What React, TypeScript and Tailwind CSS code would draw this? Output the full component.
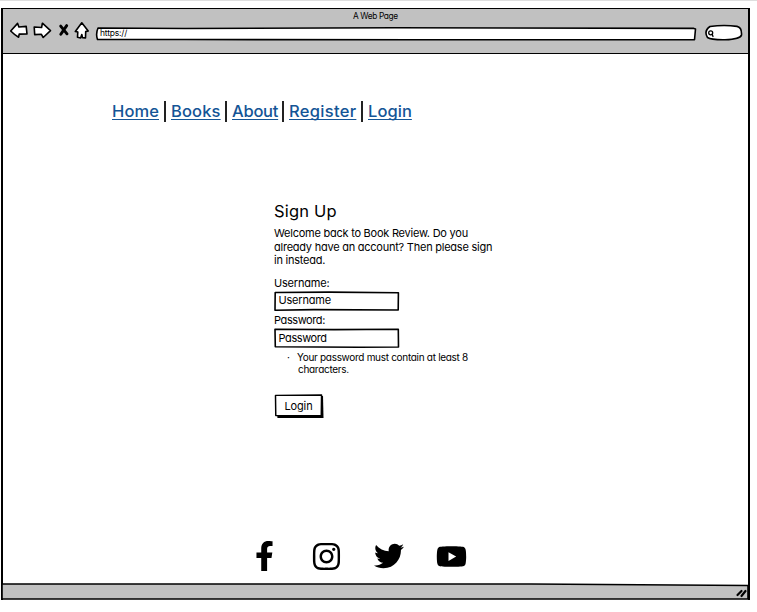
import React from "react";
import { FaFacebookF, FaInstagram, FaTwitter, FaYoutube } from "react-icons/fa";

const links = [
  { label: "Home", box: "w-[47px]", text: "tracking-[0.1px]" },
  { label: "Books", box: "w-[49px]", text: "tracking-[0.15px]" },
  { label: "About", box: "w-[45px]", text: "tracking-[-0.25px]" },
  { label: "Register", box: "w-[67px]", text: "tracking-[0.3px]" },
  { label: "Login", box: "w-[44px]", text: "tracking-[0.05px]" },
];

function NavIcons() {
  return (
    <svg className="ml-[7px] mt-[11px] h-[22px] w-[82px] shrink-0" viewBox="10 20 82 22" fill="white" stroke="black" strokeWidth="1.6" strokeLinejoin="round" strokeLinecap="round">
      <path d="M10.7 31 L17.6 23.4 L18.9 27 L26.2 26.4 L27 34 L19.2 34.1 L18.6 37.2 Q14.5 34.8 10.7 31Z" />
      <path d="M34.2 27 L41.6 27.5 L42.4 23.2 L50.5 30.6 L43.2 37.5 L41.4 34.3 L34.7 34.6Z" />
      <path d="M60.7 26.1 L67 33.8 M66.7 25.6 L60.8 34.3" strokeWidth="2.9" />
      <path d="M81.8 22.8 L88.2 31 L85.7 31.6 L85.5 38 L82.5 37.6 L81.8 34.5 L80.6 38 L77.5 37.3 L77.8 32 L75.3 31.4Z" />
    </svg>
  );
}

function Field({ label, alt }: { label: string; alt?: boolean }) {
  const spacing = alt ? "tracking-[-0.4px]" : "tracking-[-0.2px]";
  return (
    <div className="flex h-[37.5px] flex-col">
      <span className={`h-[15px] text-[11px] leading-[15px] ${spacing}`}>{label}:</span>
      <div className="relative h-[20px] w-[126px]">
        <svg className="absolute inset-0 h-full w-full" viewBox="0 0 126 20" fill="white" stroke="black" strokeWidth="1.6" strokeLinejoin="round">
          <path d={alt ? "M1 1.3 L60 1.6 L124.3 1.2 L124.5 19 L85 19.2 L1.3 18.8Z" : "M1.2 1.5 L55 1.1 L124.4 1.7 L124.2 19 L40 18.6 L1 19.2Z"} />
        </svg>
        <span className={`relative block pl-[4.5px] text-[11px] ${alt ? "leading-[20px]" : "leading-[19px]"} ${spacing}`}>{label}</span>
      </div>
    </div>
  );
}

export default function App() {
  return (
    <div className="flex h-[612px] w-[757px] flex-col overflow-hidden bg-white font-['Inter',sans-serif] text-black [font-feature-settings:'cv11']">
      <div className="h-px w-full shrink-0 bg-[#dedede]" />
      <div className="ml-[1px] mt-[7px] flex h-[592px] w-[749px] shrink-0 flex-col border-x-2 border-t-[1.5px] border-black">
        <header className="flex h-[44.5px] shrink-0 border-b-[1.5px] border-black bg-[#c1c1c1]">
          <NavIcons />
          <div className="relative ml-[3px] w-[602px]">
            <p className="ml-[258px] mt-[1px] w-[60px] whitespace-nowrap text-[8.3px] leading-[12px] tracking-[-0.35px]">A Web Page</p>
            <svg className="absolute left-0 top-[16.5px] h-[15px] w-[602px]" viewBox="0 0 602 15" fill="white" stroke="black" strokeWidth="1.6" strokeLinejoin="round">
              <path d="M3 2 L90 2.5 L300 1.8 L598.8 2.4 L600.5 3 L599.5 13.7 L320 13.8 L90 13.5 L2.5 13.4 Q0.5 8 3 2Z" />
            </svg>
            <p className="relative ml-[5px] mt-[5px] text-[8.5px] leading-[12px] tracking-[-0.2px]">https://</p>
          </div>
          <svg className="ml-[6px] mt-[14px] h-[19px] w-[40px] shrink-0" viewBox="703 23 40 19" fill="white" stroke="black" strokeWidth="1.6" strokeLinecap="round">
            <path d="M710 26.5 Q724 24.5 737 26.4 Q742 27.4 741.5 35 Q740.5 39.2 725 39.8 Q711 40 707.5 37.5 Q703.5 31 710 26.5Z" />
            <circle cx="710.7" cy="32.8" r="2" strokeWidth="1.3" />
            <path d="M712.2 34.3 L713 36.5" strokeWidth="1.3" />
          </svg>
        </header>
        <main className="flex h-[529.5px] shrink-0 flex-col">
          <nav className="ml-[109px] mt-[46.5px] flex h-[22px] items-center text-[16.5px] font-[450] leading-[22px] text-[#145596]">
            {links.map((link, i) => (
              <React.Fragment key={link.label}>
                {i > 0 && <span className="mx-[5.25px] h-[21px] w-[1.5px] shrink-0 bg-[#222]" />}
                <a className={`${link.box} ${link.text} shrink-0 whitespace-nowrap underline decoration-[1px] underline-offset-2 [text-decoration-skip-ink:none]`}>{link.label}</a>
              </React.Fragment>
            ))}
          </nav>
          <section className="ml-[271px] mt-[78px] flex h-[218px] flex-col items-start">
            <h1 className="text-[16.5px] leading-[22px] tracking-[0.2px]">Sign Up</h1>
            <p className="mt-[5px] whitespace-nowrap text-[11px] leading-[13.5px] tracking-[-0.24px]">
              Welcome back to Book Review. Do you<br />already have an account? Then please sign<br />in instead.
            </p>
            <div className="mt-[8px] flex flex-col"><Field label="Username" /><Field label="Password" alt /></div>
            <div className="flex text-[10px] leading-[12px] tracking-[-0.3px]">
              <span className="ml-[13px] w-[10px]">·</span>
              <p className="whitespace-nowrap">Your password must contain at least 8<br /><span className="ml-px">characters.</span></p>
            </div>
            <button className="relative mt-[19px] h-[25px] w-[51px] text-[11px]">
              <svg className="absolute inset-0 h-full w-full" viewBox="0 0 51 25" strokeLinejoin="round">
                <path d="M1.5 3 L49.5 2 L50 24.5 L3 24.7Z" fill="black" />
                <path d="M1 1.4 L48 1 L47.7 22.3 L1.3 22Z" fill="white" stroke="black" strokeWidth="1.5" />
              </svg>
              <span className="relative -left-px tracking-[-0.15px]">Login</span>
            </button>
          </section>
          <footer className="ml-[252px] mt-[122px] flex h-[32px] items-center">
            <FaFacebookF className="h-[30px] w-[19px]" />
            <FaInstagram className="ml-[37px] h-[31px] w-[31px]" />
            <FaTwitter className="ml-[32px] h-[30px] w-[30px]" />
            <FaYoutube className="ml-[32px] h-[31px] w-[31px]" />
          </footer>
        </main>
        <svg className="-ml-[2px] h-[18px] w-[749px] shrink-0" viewBox="0 0 749 18" stroke="black" strokeLinecap="round">
          <path d="M1 1 L530 1 L747 2.5 L747 16 L1 16Z" fill="#c1c1c1" strokeWidth="1.6" />
          <path d="M736.5 12 L740.5 8 M740.5 13 L744.5 8" strokeWidth="2.2" />
        </svg>
      </div>
    </div>
  );
}
